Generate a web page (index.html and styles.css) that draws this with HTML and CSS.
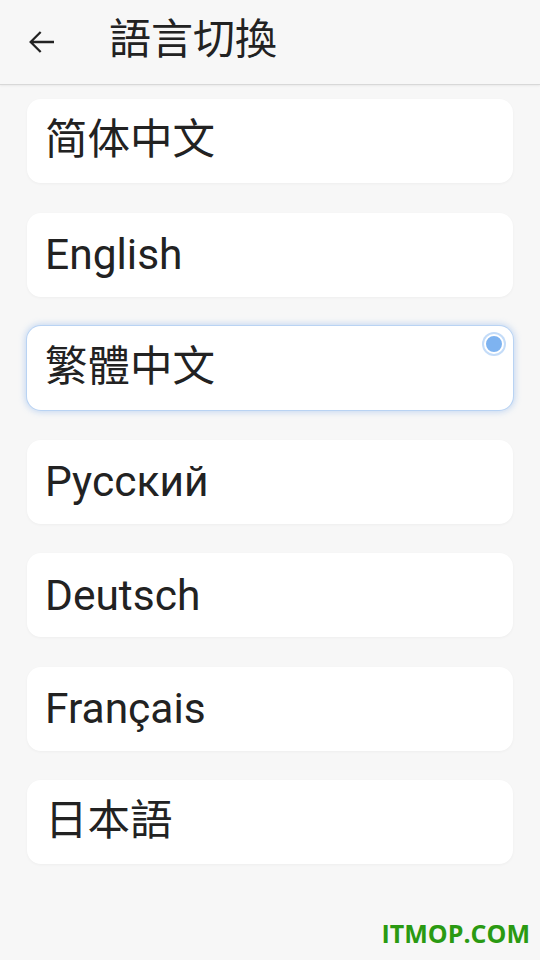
FILE: index.html
```html
<!DOCTYPE html>
<html lang="zh">

<head>
  <meta charset="UTF-8">
  <meta name="viewport" content="width=device-width, initial-scale=1.0">
  <title>語言切換</title>
  <link rel="stylesheet" href="styles.css">
</head>

<body>
  <div class="header">
    <div class="back">
      <svg width="32" height="32" viewBox="0 0 24 24">
        <path d="M21 12H3.5M11 4.5 3.5 12l7.5 7.5" fill="none" stroke="#222" stroke-width="1.7" />
      </svg>
    </div>
    <div class="title">語言切換</div>
  </div>

  <div class="list">
    <div class="item cjk">简体中文</div>
    <div class="item">English</div>
    <div class="item cjk active">繁體中文<span class="dot"></span></div>
    <div class="item">Русский</div>
    <div class="item">Deutsch</div>
    <div class="item">Français</div>
    <div class="item cjk">日本語</div>
  </div>

  <div class="mark">ITMOP.COM</div>
</body>

</html>
```

FILE: styles.css
```css
body {
  margin: 0;
  width: 540px;
  height: 960px;
  background-color: #f7f7f7;
  font-family: Roboto, "Noto Sans CJK TC", sans-serif;
  color: #222;
  position: relative;
  overflow: hidden;
}

.header {
  height: 84px;
  display: flex;
  align-items: center;
  border-bottom: 1px solid #d8d8d8;
  box-shadow: 0 1px 2px rgba(0, 0, 0, 0.06);
}

.back {
  width: 32px;
  height: 32px;
  margin-left: 26px;
}

.title {
  margin-left: 51px;
  font-size: 42px;
  line-height: 1;
  padding-bottom: 4px;
}

.list {
  display: flex;
  flex-direction: column;
  gap: 29.5px;
  padding: 14px 27px 0;
}

.item {
  box-sizing: border-box;
  height: 84px;
  background-color: #fff;
  border-radius: 14px;
  display: flex;
  align-items: center;
  padding-left: 18px;
  font-size: 42.5px;
  position: relative;
  box-shadow: 0 1px 3px rgba(0, 0, 0, 0.04);
}

.item.cjk {
  line-height: 1;
  padding-bottom: 2px;
}

.item.active {
  box-shadow: 0 0 0 1px #b9d3f3, 0 0 6px 2px rgba(130, 175, 235, 0.45);
}

.dot {
  position: absolute;
  right: 9px;
  top: 8px;
  width: 16px;
  height: 16px;
  border-radius: 50%;
  background-color: #7eb3f0;
  border: 2px solid #fff;
  box-shadow: 0 0 0 2px #c4dcf8;
}

.mark {
  position: absolute;
  right: 10px;
  bottom: 10px;
  font-family: "Open Sans", sans-serif;
  font-weight: 700;
  font-size: 25px;
  color: #2a9a12;
}
```
